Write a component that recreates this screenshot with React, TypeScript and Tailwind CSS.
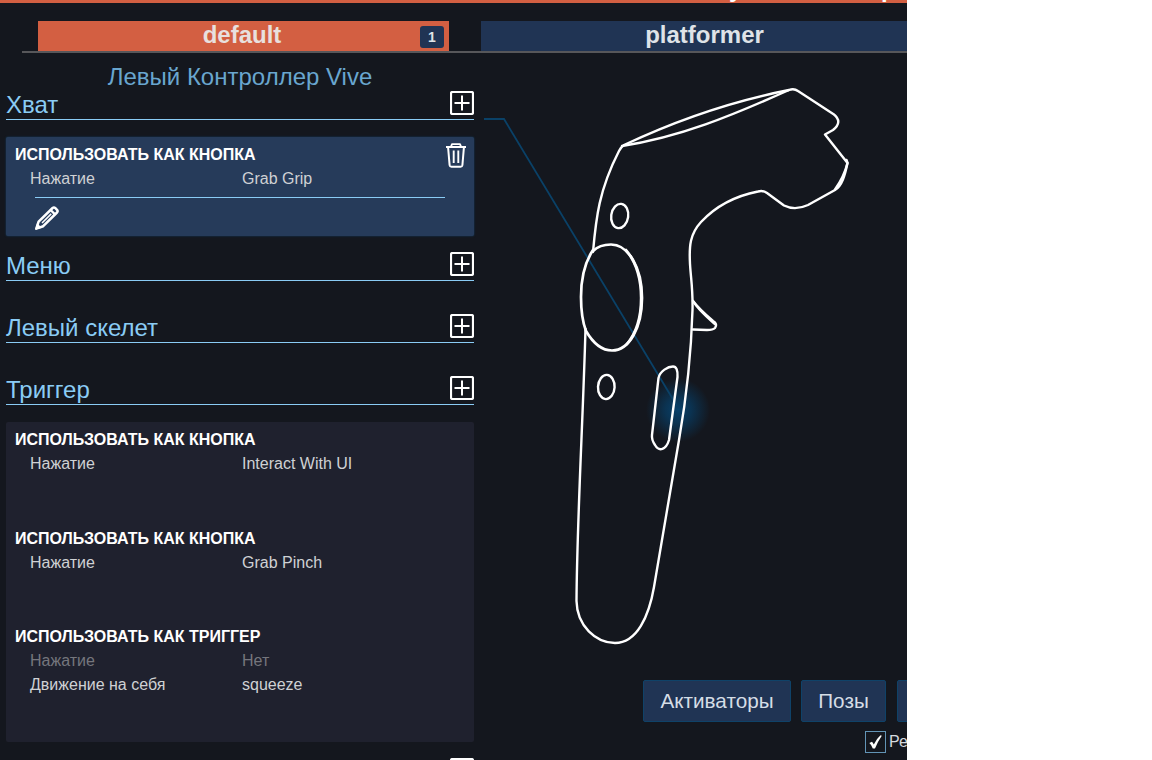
import React from "react";

type Row = { label: string; value: string; dim?: boolean };

function PlusIcon() {
  return (
    <svg width="24" height="24" viewBox="0 0 24 24" fill="none" stroke="#fff" className="shrink-0">
      <rect x="1" y="1" width="22" height="22" rx="1.5" strokeWidth="2.2" />
      <path d="M12 4.500v15M4.500 12h15" strokeWidth="2" />
    </svg>
  );
}

function TrashIcon() {
  return (
    <svg width="20" height="25" viewBox="0 0 20 25" fill="none" stroke="#fff" strokeLinejoin="round">
      <path d="M0 4h20" strokeWidth="2" />
      <path d="M5 3.600 6 1.200h8l1 2.400" strokeWidth="1.800" />
      <path d="M2.100 4.500 3.600 22.200Q3.800 23.800 5.400 23.800h9.200q1.600 0 1.800-1.600L17.900 4.500" strokeWidth="2" />
      <path d="M7.700 7.500v12.500M12.300 7.500v12.500" strokeWidth="1.900" />
    </svg>
  );
}

function PencilIcon() {
  return (
    <svg width="24" height="24" viewBox="0 0 24 24" fill="none" stroke="#fff" strokeLinejoin="round">
      <path d="M1.300 22.600 3.600 15.600 17.600 2Q19 .9 20.400 2.200L22 3.800Q23.200 5.200 22 6.500L8.200 20.200Z" strokeWidth="2.500" />
      <path d="M15.600 4 20 8.400" strokeWidth="2.400" />
      <path d="M7 17 16.200 7.900" strokeWidth="1.500" />
      <path d="M.2 23.800 2 17.200 7 21.800Z" fill="#fff" stroke="none" />
    </svg>
  );
}

function SectionHeader({ title }: { title: string }) {
  return (
    <div className="flex h-[29px] items-start justify-between border-b border-[#8accf5]">
      <h2 className="text-[24px] leading-[28px] text-[#8accf5]">{title}</h2>
      <PlusIcon />
    </div>
  );
}

function Binding({ title, rows }: { title: string; rows: Row[] }) {
  return (
    <div>
      <h3 className="pl-[9px] text-[16px] font-bold leading-[24px] text-white">{title}</h3>
      {rows.map((r) => (
        <div
          key={r.label}
          className={`flex h-6 pl-6 text-[16px] leading-[24px] ${r.dim ? "text-[#75767d]" : "text-[#cfd1d4]"}`}
        >
          <span className="w-[212px]">{r.label}</span>
          <span>{r.value}</span>
        </div>
      ))}
    </div>
  );
}

function Controller() {
  return (
    <svg width="423" height="607" viewBox="484 53 423 607" fill="none" className="block">
      <defs>
        <radialGradient id="glow">
          <stop offset="0" stopColor="#064674" stopOpacity="0.9" />
          <stop offset="0.4" stopColor="#073f68" stopOpacity="0.7" />
          <stop offset="1" stopColor="#073f68" stopOpacity="0" />
        </radialGradient>
      </defs>
      <circle cx="678" cy="410" r="32" fill="url(#glow)" />
      <path d="M484 119H504L677 406" stroke="#0a4167" strokeWidth="1.8" />
      <g stroke="#fff" strokeWidth="2.4" strokeLinecap="round" strokeLinejoin="round">
        <path d="M593 252C596 218 599 190 619 151Q621 147 624 145C677 120 733 101 789 90Q794 88 798 91L834 114.500Q843 122 833 130L825 134.500L847.500 163C845 175 842 186 835 190L808 205Q795 211 784 205.500L767 193Q763 190 758 191.500C735 196 716 206 701 222C690 234 689 246 690 264C691 280 693 290 692.500 310C691 360 686 400 679 440L654 587C649 616 637 643 615 643C596 643 577 626 576.500 601C577 520 583 420 585.500 329" />
        <path d="M622 146C680 137 731 116 789 90" />
        <path d="M835 189.500C841 181 845 173 847.500 163L846.500 160" />
        <path d="M593 250C589 256 581 270 581 297C581 313 583 323 586 331C593 343 601 350.500 612 350.500C629 350.500 642 328 642 298C642 267 628 244.500 611 244.500C604 244.500 597 247 593 251Z" strokeWidth="2.700" />
        <path d="M626 250C646 274 646 321 627 344" strokeWidth="2.700" />
        <path d="M693 301C699 309 706 315 713 321Q718 324 715 328Q713 330 707 330L693 329.500" />
        <path d="M693 301C699 311 708 318 715 324" />
        <ellipse cx="619.700" cy="216" rx="8.500" ry="12.200" transform="rotate(8 619.7 216)" />
        <ellipse cx="606.300" cy="387" rx="8.300" ry="12.100" transform="rotate(3 606.3 387)" />
        <path d="M658.500 378C660 371 668 366.500 673 366.500Q678 366.500 677.500 377L669 440C666 450 659 452 655 445C653 442 651.500 439 652 435Z" />
      </g>
    </svg>
  );
}

const pressed = "Нажатие";
const asButton = "ИСПОЛЬЗОВАТЬ КАК КНОПКА";

export default function App() {
  return (
    <div className="h-[760px] w-[1152px] overflow-hidden bg-white font-['Liberation_Sans',Arial,sans-serif]">
      <div className="flex h-[760px] w-[907px] flex-col overflow-hidden bg-[#14171e]">
        <div className="flex h-[3px] shrink-0 items-end overflow-hidden bg-[#d35f42] pl-[729px] text-[24px] font-bold leading-[28px] text-white">
          <span className="w-[152px]">y</span>
          <span>p</span>
        </div>

        <nav className="ml-[22px] mt-[18px] flex h-8 shrink-0 border-b-2 border-[#57575a] pl-4 text-[24px] font-bold leading-[28px] text-[#dfe3e8]">
          <div className="flex w-[411px] shrink-0 bg-[#d35f42] pr-[5px]">
            <span className="flex-1 pl-[26px] text-center text-[#e8e0de]">default</span>
            <span className="mt-[5px] flex h-[22px] w-6 items-center justify-center rounded-[3px] bg-[#203454] text-[14px] leading-none">1</span>
          </div>
          <div className="ml-8 w-[447px] shrink-0 bg-[#203454] text-center">platformer</div>
        </nav>

        <div className="flex min-h-0 flex-1">
          <aside className="w-[484px] shrink-0 pl-[6px] pr-[10px] pt-[10px]">
            <h1 className="text-center text-[24px] leading-[28px] text-[#69a6cf]">Левый Контроллер Vive</h1>
            <SectionHeader title="Хват" />
            <div className="relative mt-[17px] h-[99px] rounded-[2px] bg-[#263b5a] pt-[6px] shadow-[0_0_2px_#164267]">
              <Binding title={asButton} rows={[{ label: pressed, value: "Grab Grip" }]} />
              <div className="ml-[29px] mr-[29px] mt-[6px] border-t border-[#8accf5] pt-2">
                <PencilIcon />
              </div>
              <div className="absolute right-2 top-[6px]">
                <TrashIcon />
              </div>
            </div>
            <div className="mt-4">
              <SectionHeader title="Меню" />
            </div>
            <div className="mt-[33px]">
              <SectionHeader title="Левый скелет" />
            </div>
            <div className="mt-[33px]">
              <SectionHeader title="Триггер" />
            </div>
            <div className="mt-[17px] flex h-[320px] flex-col rounded-[2px] bg-[#1f212e] pt-[6px]">
              <div className="h-[99px]">
                <Binding title={asButton} rows={[{ label: pressed, value: "Interact With UI" }]} />
              </div>
              <div className="h-[98px]">
                <Binding title={asButton} rows={[{ label: pressed, value: "Grab Pinch" }]} />
              </div>
              <Binding
                title="ИСПОЛЬЗОВАТЬ КАК ТРИГГЕР"
                rows={[
                  { label: pressed, value: "Нет", dim: true },
                  { label: "Движение на себя", value: "squeeze" },
                ]}
              />
            </div>
            <div className="mt-4 flex justify-end">
              <PlusIcon />
            </div>
          </aside>

          <main className="w-[423px] shrink-0 overflow-hidden">
            <Controller />
            <div className="ml-[159px] mt-5 flex w-[400px] text-[20.700px] leading-[40px] text-[#d5dde6]">
              <button className="h-[42px] w-[148px] shrink-0 rounded-[2px] border border-[#0f4268] bg-[#203454]">Активаторы</button>
              <button className="ml-[10px] h-[42px] w-[85px] shrink-0 rounded-[2px] border border-[#0f4268] bg-[#203454]">Позы</button>
              <button className="ml-[11px] h-[42px] w-[85px] shrink-0 rounded-[2px] border border-[#0f4268] bg-[#203454]" />
            </div>
            <div className="ml-[381px] mt-[9px] flex w-[120px] items-center gap-[3px] text-[16px] leading-[22px] text-[#d5d9de]">
              <span className="flex h-[22px] w-[21px] items-center justify-center border border-[#6294b6]">
                <svg width="13" height="14" viewBox="0 0 13 14" className="shrink-0">
                  <path d="M.3 8 3 6.800Q4 7.800 4.800 9.600 7.500 3.600 11.500.2L12.800.8Q8.800 6.500 6 13.600H3.800Q2.300 9.500.3 8Z" fill="#fff" />
                </svg>
              </span>
              <span>Ре</span>
            </div>
          </main>
        </div>
      </div>
    </div>
  );
}
